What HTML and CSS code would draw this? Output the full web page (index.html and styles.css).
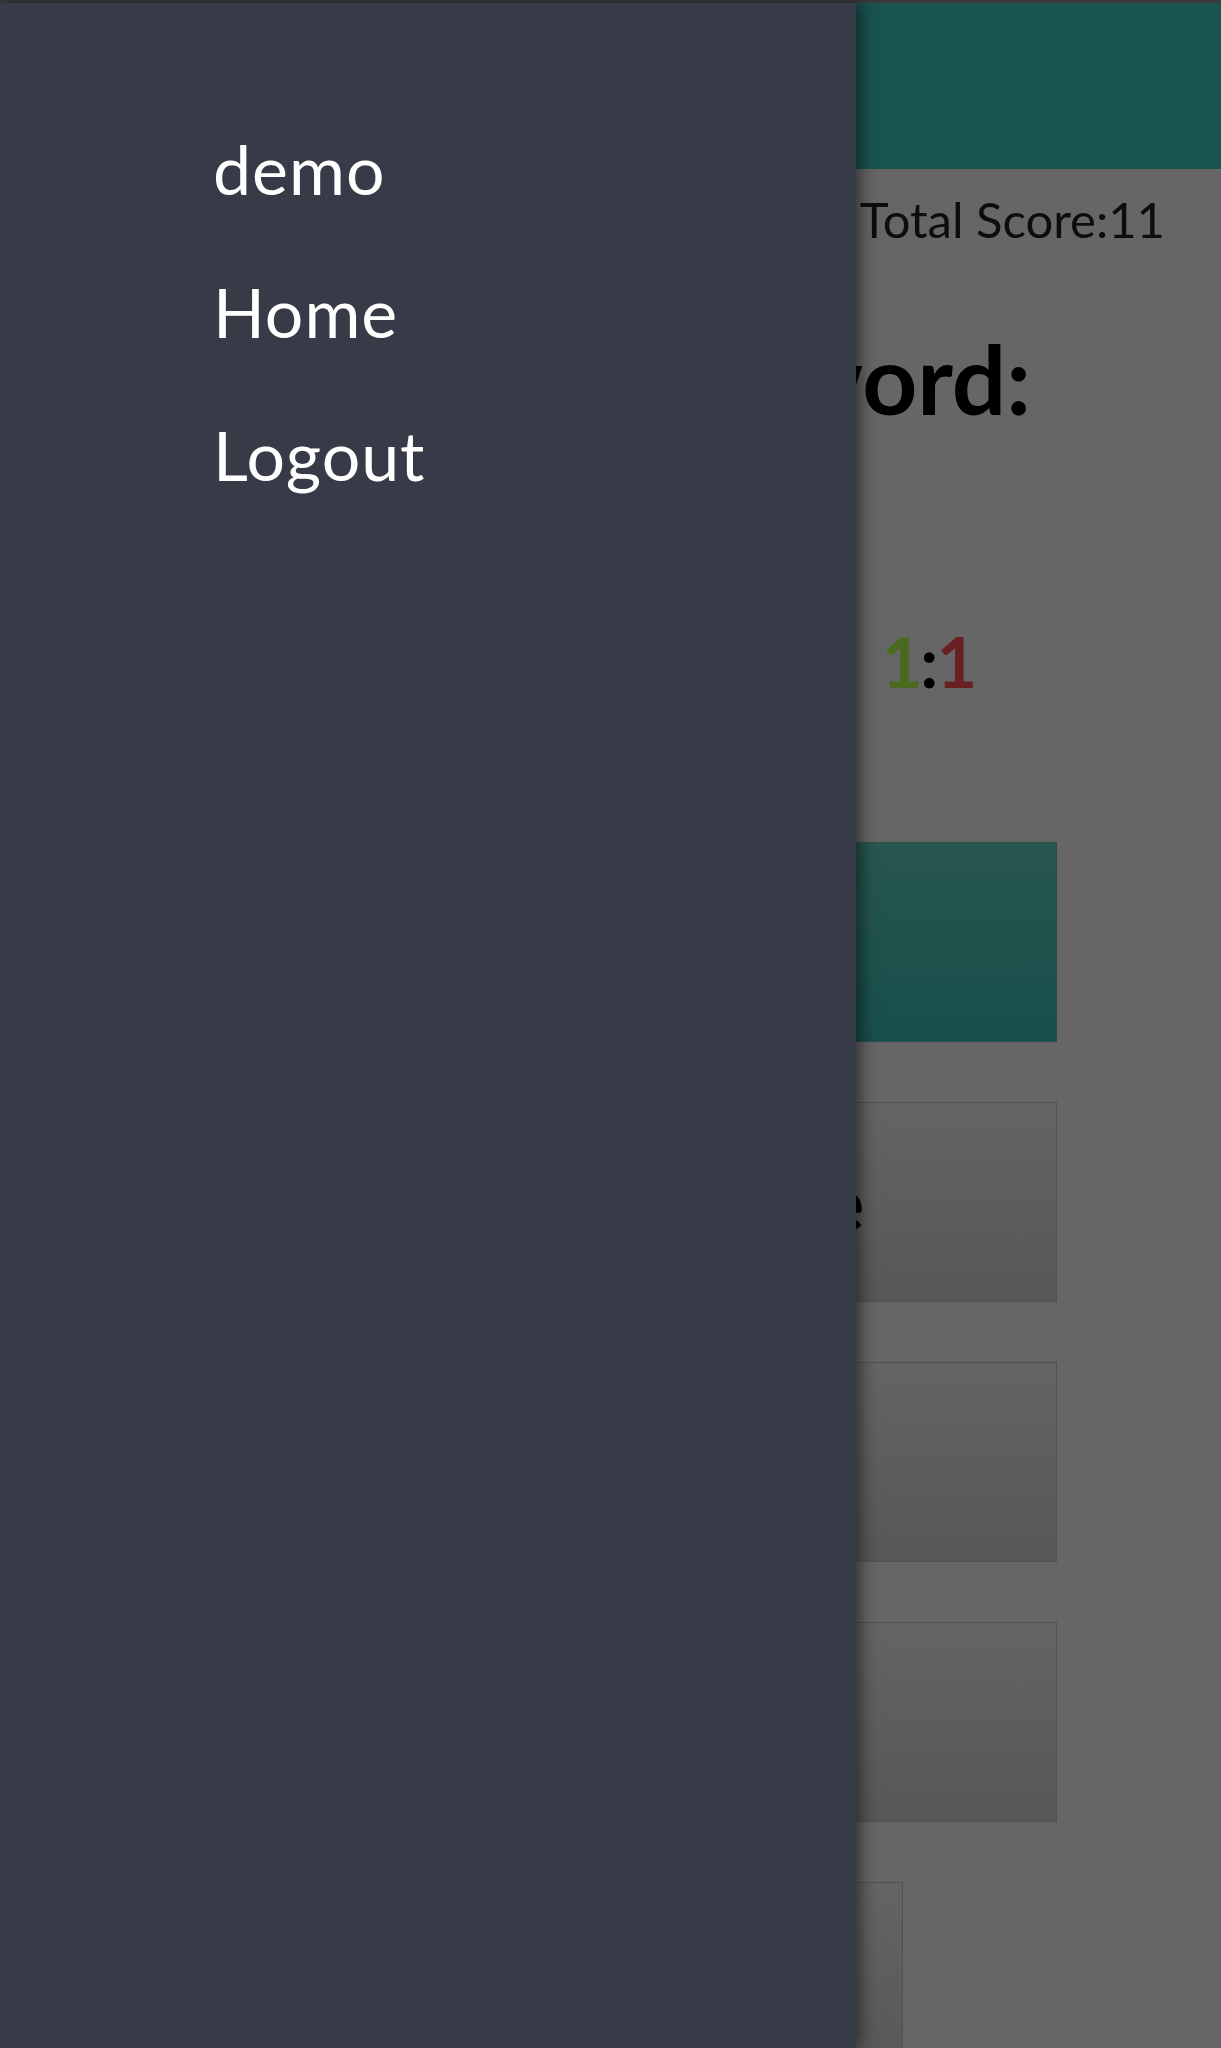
FILE: index.html
```html
<!DOCTYPE html>
<html lang="en">
<head>
<meta charset="utf-8">
<title>demo</title>
<link rel="stylesheet" href="styles.css">
</head>
<body>
<div class="statusbar"></div>
<div class="app">
  <header class="appbar"></header>
  <main class="main">
    <div class="scores">
      <span class="total">Total Score:11</span>
    </div>
    <h1 class="question">word:</h1>
    <div class="ratio"><span class="good">1</span>:<span class="bad">1</span></div>
    <div class="answers">
      <button class="answer answer-primary"></button>
      <button class="answer answer-text">ble</button>
      <button class="answer"></button>
      <button class="answer"></button>
      <button class="answer answer-small"></button>
    </div>
  </main>
</div>
<nav class="drawer">
  <div class="drawer-item">demo</div>
  <div class="drawer-item">Home</div>
  <div class="drawer-item">Logout</div>
</nav>
</body>
</html>
```

FILE: styles.css
```css
html, body {
  margin: 0;
  padding: 0;
}
body {
  width: 1221px;
  height: 2048px;
  overflow: hidden;
  background: #666666;
  font-family: Lato, "Open Sans", sans-serif;
  color: #000;
}
.statusbar {
  height: 3px;
  background: #3b3a3d;
}
.appbar {
  height: 166px;
  background: #1a544f;
}
.main {
  display: flex;
  flex-direction: column;
}
.scores {
  display: flex;
  justify-content: flex-end;
  padding: 0 56px 0 164px;
  margin-top: 21px;
  font-size: 49px;
  line-height: 1.2;
  color: #0d0d0d;
}
.question {
  margin: 71px 0 0 0;
  padding-right: 190px;
  text-align: right;
  font-size: 96px;
  font-weight: 700;
  line-height: 1.2;
  white-space: nowrap;
}
.ratio {
  margin-top: 184px;
  padding-right: 246px;
  text-align: right;
  font-size: 70px;
  font-weight: 700;
  line-height: 1.2;
  letter-spacing: -2px;
}
.good { color: #4a6a1e; }
.bad { color: #6a1f22; }
.answers {
  margin-top: 139px;
  padding: 0 164px;
  display: flex;
  flex-direction: column;
  gap: 60px;
}
.answer {
  height: 200px;
  width: 100%;
  box-sizing: border-box;
  border: 1px solid #525252;
  background: linear-gradient(#646464, #575757);
  font-family: Lato, "Open Sans", sans-serif;
  font-size: 76px;
  font-weight: 700;
  color: #000;
  display: flex;
  align-items: center;
  justify-content: flex-end;
  padding: 0 192px 0 0;
  line-height: 1.2;
}
.answer-primary {
  border-color: #2f4f4c;
  background: linear-gradient(#285650, #174f4b);
}
.answer-small {
  width: 739px;
}
.drawer {
  position: fixed;
  top: 3px;
  left: 0;
  bottom: 0;
  width: 856px;
  background: #373a47;
  box-shadow: 4px 0 16px rgba(0, 0, 0, 0.55);
  padding: 94px 0 0 213px;
  box-sizing: border-box;
  display: flex;
  flex-direction: column;
  align-items: flex-start;
}
.drawer-item {
  color: #ffffff;
  font-size: 68px;
  letter-spacing: 1px;
  line-height: 143px;
}
```
